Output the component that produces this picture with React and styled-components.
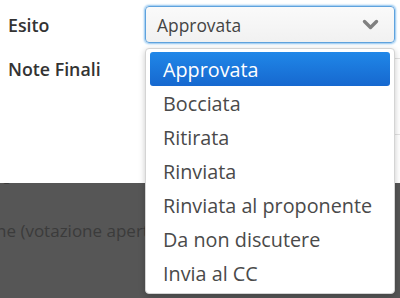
import React from 'react'
import styled, { createGlobalStyle } from 'styled-components'

const GlobalStyle = createGlobalStyle`
  html, body {
    margin: 0;
    padding: 0;
    width: 400px;
    height: 298px;
    overflow: hidden;
    font-family: "Open Sans", "Noto Sans", sans-serif;
  }
`

const Page = styled.div`
  width: 400px;
  height: 298px;
  display: flex;
  flex-direction: column;
  overflow: hidden;
`

const Modal = styled.div`
  height: 183px;
  flex: none;
  background: #fff;
  padding-top: 6px;
  box-sizing: border-box;
`

const Form = styled.div`
  display: grid;
  grid-template-columns: 145px 250px;
  row-gap: 14px;
`

const Label = styled.div`
  padding-left: 8px;
  font-size: 17.8px;
  font-weight: 600;
  color: #333;
  line-height: 24px;
  align-self: ${props => (props.top ? 'start' : 'center')};
`

const Field = styled.div`
  position: relative;
`

const Select = styled.div`
  height: 37px;
  box-sizing: border-box;
  border: 1px solid #5fa2dd;
  border-radius: 4px;
  box-shadow: 0 0 2px 1px rgba(102, 175, 233, 0.75);
  background: linear-gradient(#fafafa, #f1f1f1);
  display: flex;
  align-items: center;
  justify-content: space-between;
  padding: 0 15px 0 11px;
  font-size: 17.4px;
  color: #444;
`

const NotesBox = styled.div`
  width: 270px;
  height: 75px;
  margin-top: 1px;
  border-top: 1px solid #e2e2e2;
  border-bottom: 1px solid #e2e2e2;
`

const Menu = styled.ul`
  position: absolute;
  top: 42px;
  left: 0;
  width: 250px;
  box-sizing: border-box;
  margin: 0;
  padding: 3px 4px 3px 4px;
  list-style: none;
  background: #fff;
  border: 1px solid #d4d4d4;
  border-radius: 4px;
  box-shadow: 0 2px 6px rgba(0, 0, 0, 0.22);
  z-index: 2;
`

const Option = styled.li`
  height: 34px;
  display: flex;
  align-items: center;
  padding-left: 13px;
  border-radius: 3px;
  font-size: 19.8px;
  color: ${props => (props.active ? '#fff' : '#4a4a4a')};
  background: ${props =>
    props.active ? 'linear-gradient(#2087e8, #1668cf)' : 'transparent'};
`

const Backdrop = styled.div`
  flex: 1;
  background: #565656;
  overflow: hidden;
  color: #3b3b3b;
  font-size: 17px;
`

const HiddenLine = styled.div`
  line-height: 24px;
  margin-top: -17px;
  padding-left: 1px;
`

const BackLine = styled.div`
  line-height: 24px;
  margin-top: ${props => props.gap}px;
  margin-left: -4px;
  white-space: nowrap;
`

const options = [
  'Approvata',
  'Bocciata',
  'Ritirata',
  'Rinviata',
  'Rinviata al proponente',
  'Da non discutere',
  'Invia al CC',
]

function Chevron() {
  return (
    <svg width="17" height="11" viewBox="0 0 17 11">
      <polyline
        points="2.5,2.5 8.5,8.5 14.5,2.5"
        fill="none"
        stroke="#808080"
        strokeWidth="3.4"
        strokeLinecap="round"
        strokeLinejoin="round"
      />
    </svg>
  )
}

export default function App() {
  return (
    <Page>
      <GlobalStyle />
      <Modal>
        <Form>
          <Label>Esito</Label>
          <Field>
            <Select>
              <span>Approvata</span>
              <Chevron />
            </Select>
            <Menu>
              {options.map((o, i) => (
                <Option key={o} active={i === 0}>
                  {o}
                </Option>
              ))}
            </Menu>
          </Field>
          <Label top>Note Finali</Label>
          <NotesBox />
        </Form>
      </Modal>
      <Backdrop>
        <HiddenLine>e</HiddenLine>
        <BackLine gap={29}>ne (votazione aperta)</BackLine>
      </Backdrop>
    </Page>
  )
}
